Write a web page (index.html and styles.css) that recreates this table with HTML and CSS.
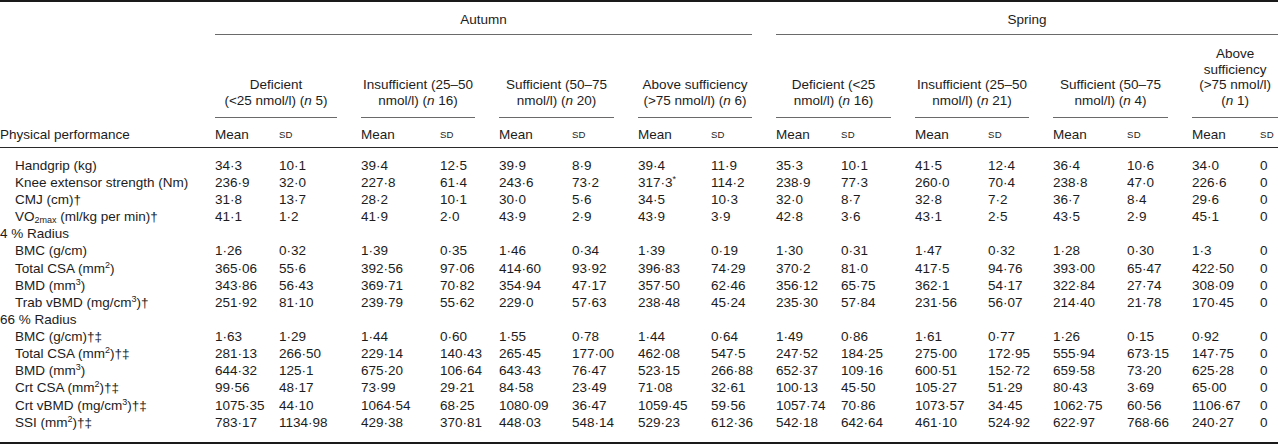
FILE: index.html
```html
<!DOCTYPE html>
<html lang="en">
<head>
<meta charset="utf-8">
<title>Physical performance by vitamin D status</title>
<link rel="stylesheet" href="styles.css">
</head>
<body>
<table class="data">
  <colgroup>
    <col style="width:215px">
    <col style="width:64px"><col style="width:82px">
    <col style="width:79px"><col style="width:59px">
    <col style="width:73px"><col style="width:66px">
    <col style="width:73px"><col style="width:65px">
    <col style="width:65px"><col style="width:74px">
    <col style="width:73px"><col style="width:65px">
    <col style="width:74px"><col style="width:65px">
    <col style="width:68px"><col style="width:18px">
  </colgroup>
  <thead>
    <tr>
      <th rowspan="2"></th>
      <th colspan="8" class="season gap"><div class="season-rule">Autumn</div></th>
      <th colspan="8" class="season"><div class="season-rule">Spring</div></th>
    </tr>
    <tr>
      <th colspan="2" class="grp gap"><div class="grp-rule">Deficient<br>(&lt;25 nmol/l) (<i>n</i> 5)</div></th>
      <th colspan="2" class="grp gap"><div class="grp-rule">Insufficient (25–50<br>nmol/l) (<i>n</i> 16)</div></th>
      <th colspan="2" class="grp gap"><div class="grp-rule">Sufficient (50–75<br>nmol/l) (<i>n</i> 20)</div></th>
      <th colspan="2" class="grp gap"><div class="grp-rule">Above sufficiency<br>(&gt;75 nmol/l) (<i>n</i> 6)</div></th>
      <th colspan="2" class="grp gap"><div class="grp-rule">Deficient (&lt;25<br>nmol/l) (<i>n</i> 16)</div></th>
      <th colspan="2" class="grp gap"><div class="grp-rule">Insufficient (25–50<br>nmol/l) (<i>n</i> 21)</div></th>
      <th colspan="2" class="grp gap"><div class="grp-rule">Sufficient (50–75<br>nmol/l) (<i>n</i> 4)</div></th>
      <th colspan="2" class="grp grp-tall"><div class="grp-rule">Above<br>sufficiency<br>(&gt;75 nmol/l)<br>(<i>n</i> 1)</div></th>
    </tr>
    <tr class="stat-row">
      <th>Physical performance</th>
      <th>Mean</th><th><span class="sd">SD</span></th>
      <th>Mean</th><th><span class="sd">SD</span></th>
      <th>Mean</th><th><span class="sd">SD</span></th>
      <th>Mean</th><th><span class="sd">SD</span></th>
      <th>Mean</th><th><span class="sd">SD</span></th>
      <th>Mean</th><th><span class="sd">SD</span></th>
      <th>Mean</th><th><span class="sd">SD</span></th>
      <th>Mean</th><th><span class="sd">SD</span></th>
    </tr>
  </thead>
  <tbody>
    <tr class="first">
      <td class="sub">Handgrip (kg)</td>
      <td>34·3</td><td>10·1</td><td>39·4</td><td>12·5</td><td>39·9</td><td>8·9</td><td>39·4</td><td>11·9</td>
      <td>35·3</td><td>10·1</td><td>41·5</td><td>12·4</td><td>36·4</td><td>10·6</td><td>34·0</td><td>0</td>
    </tr>
    <tr>
      <td class="sub">Knee extensor strength (Nm)</td>
      <td>236·9</td><td>32·0</td><td>227·8</td><td>61·4</td><td>243·6</td><td>73·2</td><td>317·3<sup>*</sup></td><td>114·2</td>
      <td>238·9</td><td>77·3</td><td>260·0</td><td>70·4</td><td>238·8</td><td>47·0</td><td>226·6</td><td>0</td>
    </tr>
    <tr>
      <td class="sub">CMJ (cm)†</td>
      <td>31·8</td><td>13·7</td><td>28·2</td><td>10·1</td><td>30·0</td><td>5·6</td><td>34·5</td><td>10·3</td>
      <td>32·0</td><td>8·7</td><td>32·8</td><td>7·2</td><td>36·7</td><td>8·4</td><td>29·6</td><td>0</td>
    </tr>
    <tr>
      <td class="sub">VO<sub>2max</sub> (ml/kg per min)†</td>
      <td>41·1</td><td>1·2</td><td>41·9</td><td>2·0</td><td>43·9</td><td>2·9</td><td>43·9</td><td>3·9</td>
      <td>42·8</td><td>3·6</td><td>43·1</td><td>2·5</td><td>43·5</td><td>2·9</td><td>45·1</td><td>0</td>
    </tr>
    <tr>
      <td class="section" colspan="17">4 % Radius</td>
    </tr>
    <tr>
      <td class="sub">BMC (g/cm)</td>
      <td>1·26</td><td>0·32</td><td>1·39</td><td>0·35</td><td>1·46</td><td>0·34</td><td>1·39</td><td>0·19</td>
      <td>1·30</td><td>0·31</td><td>1·47</td><td>0·32</td><td>1·28</td><td>0·30</td><td>1·3</td><td>0</td>
    </tr>
    <tr>
      <td class="sub">Total CSA (mm<sup>2</sup>)</td>
      <td>365·06</td><td>55·6</td><td>392·56</td><td>97·06</td><td>414·60</td><td>93·92</td><td>396·83</td><td>74·29</td>
      <td>370·2</td><td>81·0</td><td>417·5</td><td>94·76</td><td>393·00</td><td>65·47</td><td>422·50</td><td>0</td>
    </tr>
    <tr>
      <td class="sub">BMD (mm<sup>3</sup>)</td>
      <td>343·86</td><td>56·43</td><td>369·71</td><td>70·82</td><td>354·94</td><td>47·17</td><td>357·50</td><td>62·46</td>
      <td>356·12</td><td>65·75</td><td>362·1</td><td>54·17</td><td>322·84</td><td>27·74</td><td>308·09</td><td>0</td>
    </tr>
    <tr>
      <td class="sub">Trab vBMD (mg/cm<sup>3</sup>)†</td>
      <td>251·92</td><td>81·10</td><td>239·79</td><td>55·62</td><td>229·0</td><td>57·63</td><td>238·48</td><td>45·24</td>
      <td>235·30</td><td>57·84</td><td>231·56</td><td>56·07</td><td>214·40</td><td>21·78</td><td>170·45</td><td>0</td>
    </tr>
    <tr>
      <td class="section" colspan="17">66 % Radius</td>
    </tr>
    <tr>
      <td class="sub">BMC (g/cm)†‡</td>
      <td>1·63</td><td>1·29</td><td>1·44</td><td>0·60</td><td>1·55</td><td>0·78</td><td>1·44</td><td>0·64</td>
      <td>1·49</td><td>0·86</td><td>1·61</td><td>0·77</td><td>1·26</td><td>0·15</td><td>0·92</td><td>0</td>
    </tr>
    <tr>
      <td class="sub">Total CSA (mm<sup>2</sup>)†‡</td>
      <td>281·13</td><td>266·50</td><td>229·14</td><td>140·43</td><td>265·45</td><td>177·00</td><td>462·08</td><td>547·5</td>
      <td>247·52</td><td>184·25</td><td>275·00</td><td>172·95</td><td>555·94</td><td>673·15</td><td>147·75</td><td>0</td>
    </tr>
    <tr>
      <td class="sub">BMD (mm<sup>3</sup>)</td>
      <td>644·32</td><td>125·1</td><td>675·20</td><td>106·64</td><td>643·43</td><td>76·47</td><td>523·15</td><td>266·88</td>
      <td>652·37</td><td>109·16</td><td>600·51</td><td>152·72</td><td>659·58</td><td>73·20</td><td>625·28</td><td>0</td>
    </tr>
    <tr>
      <td class="sub">Crt CSA (mm<sup>2</sup>)†‡</td>
      <td>99·56</td><td>48·17</td><td>73·99</td><td>29·21</td><td>84·58</td><td>23·49</td><td>71·08</td><td>32·61</td>
      <td>100·13</td><td>45·50</td><td>105·27</td><td>51·29</td><td>80·43</td><td>3·69</td><td>65·00</td><td>0</td>
    </tr>
    <tr>
      <td class="sub">Crt vBMD (mg/cm<sup>3</sup>)†‡</td>
      <td>1075·35</td><td>44·10</td><td>1064·54</td><td>68·25</td><td>1080·09</td><td>36·47</td><td>1059·45</td><td>59·56</td>
      <td>1057·74</td><td>70·86</td><td>1073·57</td><td>34·45</td><td>1062·75</td><td>60·56</td><td>1106·67</td><td>0</td>
    </tr>
    <tr class="last">
      <td class="sub">SSI (mm<sup>2</sup>)†‡</td>
      <td>783·17</td><td>1134·98</td><td>429·38</td><td>370·81</td><td>448·03</td><td>548·14</td><td>529·23</td><td>612·36</td>
      <td>542·18</td><td>642·64</td><td>461·10</td><td>524·92</td><td>622·97</td><td>768·66</td><td>240·27</td><td>0</td>
    </tr>
  </tbody>
</table>
</body>
</html>
```

FILE: styles.css
```css
html, body {
  margin: 0;
  padding: 0;
  background: #ffffff;
}

body {
  font-family: "Liberation Sans", Arial, "Helvetica", sans-serif;
  font-size: 13.5px;
  color: #1c1c1c;
}

.data {
  width: 1278px;
  table-layout: fixed;
  border-collapse: separate;
  border-spacing: 0;
  border-top: 2px solid #1a1a1a;
  border-bottom: 2px solid #1a1a1a;
}

.data th,
.data td {
  padding: 0;
  font-weight: normal;
  text-align: left;
  white-space: nowrap;
  line-height: 17.13px;
  vertical-align: middle;
  overflow: visible;
}

.data .gap {
  padding-right: 24px;
}

.season {
  vertical-align: top;
}

.season-rule {
  text-align: center;
  padding: 9px 0 6px;
  line-height: 17.13px;
  border-bottom: 1px solid #6a6a6a;
}

.data .grp {
  vertical-align: bottom;
}

.data .grp-tall {
  padding-top: 11px;
}

.grp-rule {
  text-align: center;
  line-height: 15.5px;
  padding-bottom: 9px;
  border-bottom: 1px solid #6a6a6a;
}

.stat-row th {
  padding-top: 7px;
  padding-bottom: 4px;
  border-bottom: 1px solid #2a2a2a;
}

.sd {
  font-size: 9.6px;
  letter-spacing: 0.2px;
}

.data .first td {
  padding-top: 8.5px;
}

.data .last td {
  padding-bottom: 11px;
}

.data .sub {
  padding-left: 15px;
}

.data .section {
  padding-left: 0;
}

sup, sub {
  font-size: 9px;
  line-height: 0;
}

sup {
  vertical-align: 5px;
}

sub {
  vertical-align: -2px;
}
```
